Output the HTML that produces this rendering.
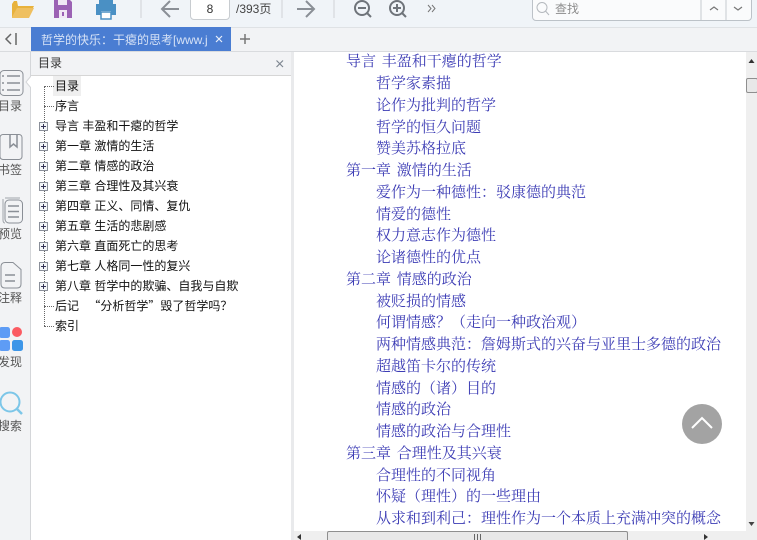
<!DOCTYPE html>
<html lang="zh-CN"><head><meta charset="utf-8"><style>
html,body{margin:0;padding:0}
body{width:757px;height:540px;overflow:hidden;position:relative;background:#f2f3f5;font-family:"Liberation Sans","Noto Sans CJK SC",sans-serif}
.a{position:absolute}
#toolbar{left:0;top:0;width:757px;height:27px;background:#f0f4f8;border-bottom:1px solid #dfe2e5}
#tree{left:31px;top:76px;width:260px;height:464px;background:#fff}
#panelhead{left:31px;top:52px;width:260px;height:23px;background:#f2f3f5;border-bottom:1px solid #d6d6d6}
#content{left:294px;top:52px;width:452px;height:479px;background:#fff}
.t{position:absolute;left:55px;font-size:12px;line-height:20px;color:#111;white-space:nowrap}
.c{position:absolute;font-family:"Liberation Serif","Noto Serif CJK SC",serif;font-size:15px;line-height:22px;color:#3d3db5;white-space:nowrap}
.l1{left:346px;word-spacing:2px}.l2{left:376px}
.s{position:absolute;width:30px;text-align:center;left:-5px;font-size:12px;color:#555;line-height:16px}
.pm{position:absolute;left:39px;width:7px;height:7px;border:1px solid #8a8f99;background:#f4f6f8}
.pm:before{content:"";position:absolute;left:1px;top:3px;width:5px;height:1px;background:#335}
.pm:after{content:"";position:absolute;left:3px;top:1px;width:1px;height:5px;background:#335}
.dh{position:absolute;left:44px;width:10px;border-top:1px dotted #666}
.q{font-family:"Noto Sans CJK SC",sans-serif}
</style></head><body>
<div class="a" id="toolbar"></div>

<svg class="a" style="left:0;top:0" width="757" height="27" viewBox="0 0 757 27">
<path d="M12 4 L12 18 L28 18 L34 6 L18 6 L17 1 L14 1 Z" fill="#e8b23c"/>
<path d="M12 17 L17 8 L34 8 L29 18 L12 18 Z" fill="#efc060"/>
<path d="M54 0 H70 L72 2 V18 H54 Z" fill="#9b62b4"/>
<rect x="58" y="0" width="9" height="5" fill="#f0e8f4"/>
<rect x="59" y="10" width="8" height="8" fill="#f0e8f4"/><rect x="62" y="12" width="2" height="4" fill="#9b62b4"/>
<rect x="99" y="0" width="14" height="4" fill="#4a90c4"/>
<path d="M96 4 H116 V15 H111 V11 H101 V15 H96 Z" fill="#4a90c4"/>
<rect x="101" y="12" width="10" height="7" fill="#fff" stroke="#4a90c4" stroke-width="1.5"/>
<path d="M141 0 V18 M282 0 V18 M334 0 V18" stroke="#cfd2d6" stroke-width="1"/>
<path d="M179 9 H163 M170 1 L162 9 L170 17" fill="none" stroke="#8a8f96" stroke-width="2"/>
<path d="M297 9 H313 M306 1 L314 9 L306 17" fill="none" stroke="#8a8f96" stroke-width="2"/>
<circle cx="362" cy="8" r="7" fill="none" stroke="#6f747a" stroke-width="2"/>
<path d="M358 8 H366 M367 13 L371 17" stroke="#6f747a" stroke-width="2"/>
<circle cx="397" cy="8" r="7" fill="none" stroke="#6f747a" stroke-width="2"/>
<path d="M393 8 H401 M397 4 V12 M402 13 L406 17" stroke="#6f747a" stroke-width="2"/>
<path d="M428 5 L431 8.500 L428 12 M432 5 L435 8.500 L432 12" fill="none" stroke="#777" stroke-width="1"/>
</svg>

<div class="a" style="left:190px;top:-6px;width:38px;height:24px;background:#fff;border:1px solid #c8ccd0;border-radius:4px;text-align:center;font-size:12px;line-height:28px;color:#333">8</div>
<div class="a" style="left:236px;top:0;font-size:12px;line-height:18px;color:#444;white-space:nowrap">/393页</div>

<div class="a" style="left:532px;top:-6px;width:218px;height:25px;background:#fafbfc;border:1px solid #bcc2c8;border-radius:4px"></div>
<svg class="a" style="left:532px;top:0" width="225" height="22" viewBox="0 0 225 22">
<circle cx="10" cy="7.500" r="5" fill="none" stroke="#b5b9be" stroke-width="1"/><path d="M13.500 11 L17 15" stroke="#b5b9be"/>
<path d="M169 0 V20 M194 0 V20" stroke="#c6cbd0"/>
<path d="M178 10 L182 7 L186 10" fill="none" stroke="#777" stroke-width="1.200"/>
<path d="M202 7 L206 10 L210 7" fill="none" stroke="#777" stroke-width="1.200"/>
</svg>
<div class="a" style="left:555px;top:0;font-size:12px;line-height:18px;color:#8c8c8c">查找</div>

<svg class="a" style="left:0;top:28px" width="31" height="23" viewBox="0 0 31 23">
<path d="M11 6 L6 11 L11 16" fill="none" stroke="#666" stroke-width="1.500"/><path d="M16 5 V17" stroke="#666" stroke-width="1.500"/>
</svg>
<div class="a" style="left:31px;top:27px;width:200px;height:25px;background:#4a7dd2"></div>
<div class="a" style="left:41px;top:27px;width:169px;height:25px;overflow:hidden;font-size:12px;line-height:26px;color:#d6e2f6;white-space:nowrap">哲学的快乐：干瘪的思考[www.j</div>
<svg class="a" style="left:214px;top:34px" width="10" height="10" viewBox="0 0 10 10"><path d="M2 2 L8 8 M8 2 L2 8" stroke="#e8eefa" stroke-width="1.200"/></svg>
<svg class="a" style="left:239px;top:33px" width="12" height="12" viewBox="0 0 12 12"><path d="M1 6 H11 M6 1 V11" stroke="#777" stroke-width="1.500"/></svg>
<div class="a" style="left:0;top:51px;width:757px;height:1px;background:#d9dbde"></div>

<div class="a" style="left:0;top:52px;width:30px;height:488px;background:#f2f3f5;border-right:1px solid #d4d6d9"></div>

<svg class="a" style="left:0;top:52px" width="32" height="390" viewBox="0 0 32 390">
<rect x="0" y="18.500" width="23" height="25" rx="4" fill="none" stroke="#8a8f96" stroke-width="1"/>
<path d="M2 24 H4 M7 24 H20 M2 31 H4 M7 31 H20 M2 38 H4 M7 38 H20" stroke="#8a8f96" stroke-width="1.500"/>
<path d="M31 24 L26 30 L31 36" fill="#fff" stroke="#d4d6d9"/>
<rect x="0" y="82.500" width="22" height="25" rx="3" fill="none" stroke="#8a8f96"/>
<path d="M10 83 V95 L13.500 92 L17 95 V83" fill="none" stroke="#8a8f96" stroke-width="1.500"/>
<path d="M3 147 V168 Q3 171 5 171 M5 146 H20" fill="none" stroke="#a0a4aa"/>
<rect x="5" y="148" width="17.500" height="23" rx="4" fill="none" stroke="#8a8f96"/>
<path d="M8 154 H19 M8 159.500 H19 M8 165 H19" stroke="#8a8f96" stroke-width="1.500"/>
<path d="M1 215 Q1 210.500 5 210.500 H13 L21 217.500 V232 Q21 236 17 236 H5 Q1 236 1 232 Z" fill="none" stroke="#8a8f96"/>
<path d="M5 223 H15 M5 229 H15" stroke="#8a8f96" stroke-width="1.500"/>
<rect x="-1" y="275" width="11" height="11" rx="2.500" fill="#5e9cf5"/>
<circle cx="17" cy="280" r="5" fill="#fb5b62"/>
<rect x="-1" y="288" width="11" height="11" rx="2.500" fill="#5e9cf5"/>
<rect x="12" y="288" width="11" height="11" rx="2.500" fill="#3d96e8"/>
<circle cx="10" cy="350" r="9.500" fill="none" stroke="#7cc6e8" stroke-width="2"/>
<path d="M17 357 L22 362" stroke="#7cc6e8" stroke-width="2.500"/>
</svg>
<div class="s" style="top:98px">目录</div>
<div class="s" style="top:162px">书签</div>
<div class="s" style="top:226px">预览</div>
<div class="s" style="top:290px">注释</div>
<div class="s" style="top:354px">发现</div>
<div class="s" style="top:418px">搜索</div>

<div class="a" id="panelhead"></div>
<div class="a" style="left:38px;top:52px;font-size:12px;line-height:23px;color:#333">目录</div>
<svg class="a" style="left:275px;top:59px" width="10" height="10" viewBox="0 0 10 10"><path d="M1.500 1.500 L8 8 M8 1.500 L1.500 8" stroke="#7d8590" stroke-width="1.200"/></svg>

<div class="a" id="tree"></div>
<div class="a" style="left:291px;top:52px;width:3px;height:488px;background:#e9eaec"></div>
<div class="a" style="left:53px;top:76px;width:28px;height:20px;background:#efefef"></div>
<div class="a" style="left:44px;top:86px;height:240px;border-left:1px dotted #666"></div>
<div class="dh" style="top:86px"></div><div class="dh" style="top:106px"></div>
<div class="dh" style="top:306px"></div><div class="dh" style="top:326px"></div>
<div class="pm" style="top:122px"></div><div class="pm" style="top:142px"></div><div class="pm" style="top:162px"></div><div class="pm" style="top:182px"></div><div class="pm" style="top:202px"></div><div class="pm" style="top:222px"></div><div class="pm" style="top:242px"></div><div class="pm" style="top:262px"></div><div class="pm" style="top:282px"></div>
<div class="t" style="top:76px">目录</div>
<div class="t" style="top:96px">序言</div>
<div class="t" style="top:116px">导言 丰盈和干瘪的哲学</div>
<div class="t" style="top:136px">第一章 激情的生活</div>
<div class="t" style="top:156px">第二章 情感的政治</div>
<div class="t" style="top:176px">第三章 合理性及其兴衰</div>
<div class="t" style="top:196px">第四章 正义、同情、复仇</div>
<div class="t" style="top:216px">第五章 生活的悲剧感</div>
<div class="t" style="top:236px">第六章 直面死亡的思考</div>
<div class="t" style="top:256px">第七章 人格同一性的复兴</div>
<div class="t" style="top:276px">第八章 哲学中的欺骗、自我与自欺</div>
<div class="t" style="top:296px">后记 <span class="q" style="margin-left:6px">“分析哲学”毁了哲学吗？</span></div>
<div class="t" style="top:316px">索引</div>

<div class="a" id="content"></div>
<div class="c l1" style="top:51px">导言 丰盈和干瘪的哲学</div>
<div class="c l2" style="top:73px">哲学家素描</div>
<div class="c l2" style="top:95px">论作为批判的哲学</div>
<div class="c l2" style="top:117px">哲学的恒久问题</div>
<div class="c l2" style="top:138px">赞美苏格拉底</div>
<div class="c l1" style="top:160px">第一章 激情的生活</div>
<div class="c l2" style="top:182px">爱作为一种德性：驳康德的典范</div>
<div class="c l2" style="top:204px">情爱的德性</div>
<div class="c l2" style="top:225px">权力意志作为德性</div>
<div class="c l2" style="top:247px">论诸德性的优点</div>
<div class="c l1" style="top:269px">第二章 情感的政治</div>
<div class="c l2" style="top:291px">被贬损的情感</div>
<div class="c l2" style="top:312px">何谓情感？（走向一种政治观）</div>
<div class="c l2" style="top:334px">两种情感典范：詹姆斯式的兴奋与亚里士多德的政治</div>
<div class="c l2" style="top:356px">超越笛卡尔的传统</div>
<div class="c l2" style="top:378px">情感的（诸）目的</div>
<div class="c l2" style="top:399px">情感的政治</div>
<div class="c l2" style="top:421px">情感的政治与合理性</div>
<div class="c l1" style="top:443px">第三章 合理性及其兴衰</div>
<div class="c l2" style="top:465px">合理性的不同视角</div>
<div class="c l2" style="top:486px">怀疑（理性）的一些理由</div>
<div class="c l2" style="top:508px">从求和到利己：理性作为一个本质上充满冲突的概念</div>

<div class="a" style="left:682px;top:404px;width:40px;height:40px;border-radius:50%;background:#a3a3a3"></div>
<svg class="a" style="left:682px;top:404px" width="40" height="40" viewBox="0 0 40 40"><path d="M10 24 L20 14 L30 24" fill="none" stroke="#fff" stroke-width="2"/></svg>

<div class="a" style="left:746px;top:52px;width:11px;height:479px;background:#efefef"></div>
<svg class="a" style="left:746px;top:52px" width="11" height="479" viewBox="0 0 11 479">
<path d="M5.500 7 L2.500 11 H8.500 Z" fill="#333"/>
<rect x="0.500" y="26.500" width="11" height="14" rx="1.500" fill="#e8e8e8" stroke="#8f8f8f"/>
<path d="M5.500 476 L2.500 472 H8.500 Z" fill="#444" transform="translate(0,-2)"/>
</svg>
<div class="a" style="left:294px;top:531px;width:463px;height:9px;background:#efefef"></div>
<div class="a" style="left:327px;top:531px;width:301px;height:9px;box-sizing:border-box;background:#e8e8e8;border:1px solid #8f8f8f;border-bottom:0;border-radius:2px 2px 0 0"></div>
<svg class="a" style="left:294px;top:531px" width="463" height="9" viewBox="0 0 463 9">
<path d="M7 3 L3 6 L7 9 Z M410 3 L414 6 L410 9 Z" fill="#333"/>
<path d="M180.500 3 V9 M183.500 3 V9 M186.500 3 V9" stroke="#666"/>
</svg>
</body></html>
